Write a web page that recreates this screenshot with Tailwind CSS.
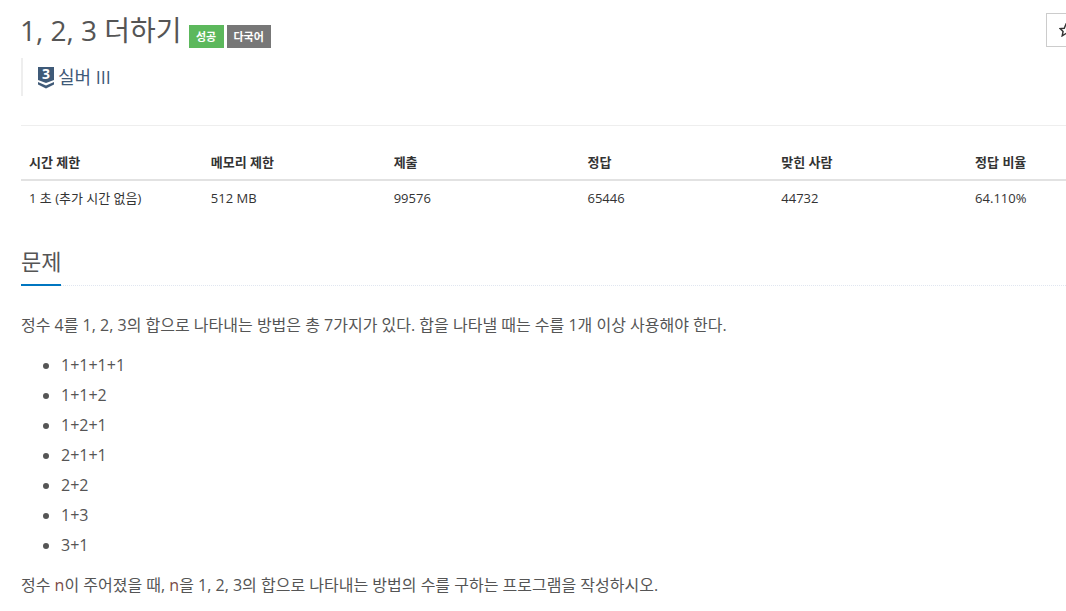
<!DOCTYPE html>
<html lang="ko">
<head>
    <meta charset="UTF-8">
    <title>1, 2, 3 더하기</title>
    <script src="https://cdn.jsdelivr.net/npm/@tailwindcss/browser@4"></script>
</head>
<body class="bg-white overflow-hidden h-[611px] w-[1066px] text-[#555] font-['Open_Sans','Noto_Sans_CJK_KR',sans-serif]">
    <div class="relative pl-[21px] w-[1066px] overflow-hidden">
        <!-- title -->
        <button class="absolute left-[1046px] top-[13px] w-[40px] h-[34px] border border-[#ccc] bg-white flex items-center pl-[12px]">
            <svg class="w-[14px] h-[14px]" viewBox="0 0 24 24" fill="none" stroke="#333" stroke-width="2.5"><polygon points="12,2 15,9 22,9.5 17,14.5 18.5,22 12,18 5.500,22 7,14.5 2,9.500 9,9"/></svg>
        </button>
        <div class="flex items-center h-[63px]">
            <span class="text-[28px] leading-[33px] mb-[3px] ml-[-1px]">1, 2, 3 더하기</span>
            <span class="ml-[7px] mt-[10px] pt-[1px] h-[23px] w-[35px] flex items-center justify-center bg-[#5cb85c] text-white text-[11px] font-bold">성공</span>
            <span class="ml-[3px] mt-[10px] pt-[1px] h-[23px] w-[44px] flex items-center justify-center bg-[#777] text-white text-[11px] font-bold">다국어</span>
        </div>
        <div class="border-l-[2px] border-[#eee] h-[38px] mt-[-5px] pl-[15px] flex items-center gap-[5px]">
            <svg class="w-[16px] h-[24px] overflow-visible" viewBox="0 0 16 24">
                <path d="M0 2h16v13l-8 3-8-3z" fill="#3f5a78"/>
                <path d="M0 17l8 3.500 8-3.500v2.500l-8 4-8-4z" fill="#3f5a78"/>
                <text x="8" y="14" text-anchor="middle" fill="#fff" font-size="14" font-weight="700" font-family="Open Sans">3</text>
            </svg>
            <span class="text-[18px] text-[#3f5a78] ml-[-1px]">실버 III</span>
        </div>
        <div class="border-t border-[#eee] mt-[29px]"></div>

        <!-- limits table -->
        <div class="mt-[18px] text-[13px] text-[#333]">
            <div class="flex h-[37px] pt-[3px] items-center font-bold border-b-[2px] border-[#e2e2e2]">
                <div class="w-[182px] pl-[8px]">시간 제한</div>
                <div class="w-[183px] pl-[8px]">메모리 제한</div>
                <div class="w-[194px] pl-[8px]">제출</div>
                <div class="w-[194px] pl-[8px]">정답</div>
                <div class="w-[194px] pl-[8px]">맞힌 사람</div>
                <div class="w-[99px] pl-[8px]">정답 비율</div>
            </div>
            <div class="flex h-[35px] items-center">
                <div class="w-[182px] pl-[8px]">1 초 (추가 시간 없음)</div>
                <div class="w-[183px] pl-[8px]">512 MB</div>
                <div class="w-[194px] pl-[8px]">99576</div>
                <div class="w-[194px] pl-[8px]">65446</div>
                <div class="w-[194px] pl-[8px]">44732</div>
                <div class="w-[99px] pl-[8px]">64.110%</div>
            </div>
        </div>

        <!-- problem -->
        <div class="mt-[29px] border-b border-dotted border-[#e0e6f0] h-[41px] relative">
            <h2 class="text-[22px] leading-[30px] text-[#555] pt-[1px]">문제</h2>
            <div class="absolute left-0 bottom-[-1px] w-[40px] h-[2px] bg-[#0076c0]"></div>
        </div>
        <div class="text-[16px] leading-[20px]">
            <p class="mt-[29px]">정수 4를 1, 2, 3의 합으로 나타내는 방법은 총 7가지가 있다. 합을 나타낼 때는 수를 1개 이상 사용해야 한다.</p>
            <ul class="list-disc pl-[40px] mt-[15px] text-[#555]">
                <li class="h-[30px] leading-[30px]">1+1+1+1</li>
                <li class="h-[30px] leading-[30px]">1+1+2</li>
                <li class="h-[30px] leading-[30px]">1+2+1</li>
                <li class="h-[30px] leading-[30px]">2+1+1</li>
                <li class="h-[30px] leading-[30px]">2+2</li>
                <li class="h-[30px] leading-[30px]">1+3</li>
                <li class="h-[30px] leading-[30px]">3+1</li>
            </ul>
            <p class="mt-[15px]">정수 <span class="text-[#7a4a44]">n</span>이 주어졌을 때, <span class="text-[#7a4a44]">n</span>을 1, 2, 3의 합으로 나타내는 방법의 수를 구하는 프로그램을 작성하시오.</p>
        </div>
    </div>
</body>
</html>
